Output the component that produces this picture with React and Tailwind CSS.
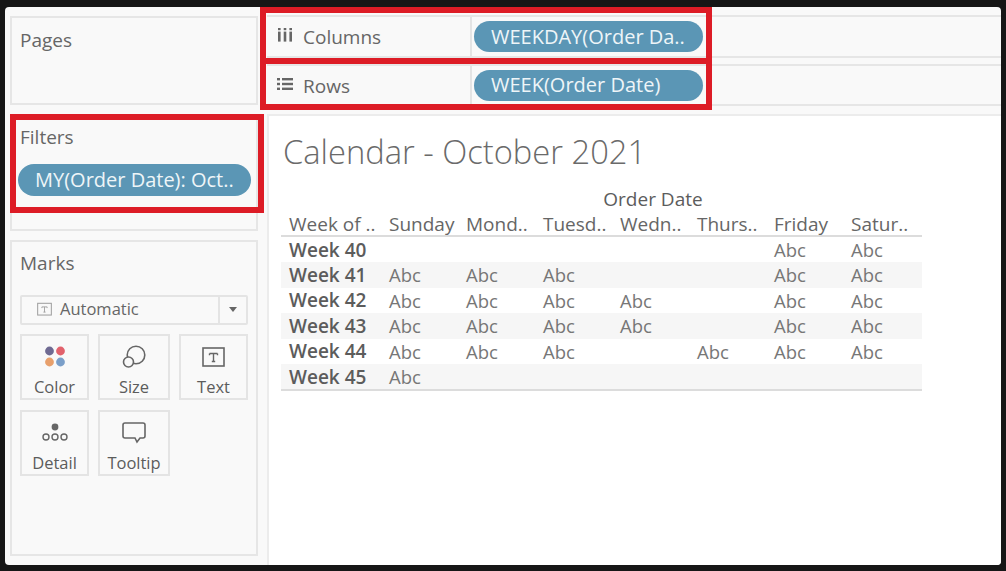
const FONT = { fontFamily: '"Open Sans", "Noto Sans", sans-serif' };

function Pill({ children, className }) {
  return (
    <div className={`flex items-center rounded-full bg-[#5b96b5] text-[20px] leading-none whitespace-nowrap text-[#eef5f8] ${className}`}>
      {children}
    </div>
  );
}

function ColumnsIcon() {
  return (
    <svg width="16" height="16" viewBox="0 0 16 16" className="fill-[#666]">
      <rect x="1" y="4.6" width="2.6" height="10" />
      <rect x="6.7" y="4.6" width="2.6" height="10" />
      <rect x="12.4" y="4.6" width="2.6" height="10" />
      <rect x="1" y="1" width="2.6" height="2.2" />
      <rect x="6.7" y="1" width="2.6" height="2.2" />
      <rect x="12.4" y="1" width="2.6" height="2.2" />
    </svg>
  );
}

function RowsIcon() {
  return (
    <svg width="16" height="14" viewBox="0 0 16 14" className="fill-[#666]">
      <rect x="0" y="1" width="3" height="2.4" />
      <rect x="5" y="1" width="11" height="2.4" />
      <rect x="0" y="5.8" width="3" height="2.4" />
      <rect x="5" y="5.8" width="11" height="2.4" />
      <rect x="0" y="10.6" width="3" height="2.4" />
      <rect x="5" y="10.6" width="11" height="2.4" />
    </svg>
  );
}

function Shelf({ icon, label, pillText, className, iconClass }) {
  return (
    <div className={`flex border-y-2 border-[#e6e6e6] ${className}`}>
      <div className="flex w-[205px] items-center border-r-2 border-[#e4e4e4] pl-[10px] text-[19px] text-[#666]">
        <span className={`flex w-[26px] items-center ${iconClass}`}>{icon}</span>
        <span className="pt-[2px]">{label}</span>
      </div>
      <div className="flex flex-1 items-center pl-[2px]">
        <Pill className="h-[31px] w-[229px] pl-[17px]">{pillText}</Pill>
      </div>
    </div>
  );
}

function TextBoxIcon({ size = 23, stroke = '#666' }) {
  return (
    <svg width={size} height={size} viewBox="0 0 23 21" fill="none">
      <rect x="1" y="1" width="21" height="18" stroke={stroke} strokeWidth="1.6" />
      <path d="M7.5 6.5h8M11.5 6.5v8M9.8 14.5h3.4M7.5 6.5v1.8M15.5 6.5v1.8" stroke={stroke} strokeWidth="1.4" />
    </svg>
  );
}

function ColorIcon() {
  return (
    <svg width="22" height="22" viewBox="0 0 22 22">
      <circle cx="5.5" cy="5" r="4.4" fill="#6f6a92" />
      <circle cx="16.5" cy="5" r="4.4" fill="#e2626c" />
      <circle cx="5.5" cy="16" r="4.4" fill="#e8a06c" />
      <circle cx="16.5" cy="16" r="4.4" fill="#7b9fc9" />
    </svg>
  );
}

function SizeIcon() {
  return (
    <svg width="24" height="24" viewBox="0 0 24 24" fill="none" stroke="#666" strokeWidth="1.6">
      <circle cx="14" cy="10" r="8.8" />
      <circle cx="6.5" cy="17" r="5" fill="#f9f9f9" />
    </svg>
  );
}

function DetailIcon() {
  return (
    <svg width="26" height="20" viewBox="0 0 26 20" fill="none" stroke="#666" strokeWidth="1.4">
      <circle cx="13" cy="4" r="3.4" fill="#666" stroke="none" />
      <circle cx="4" cy="14" r="3" />
      <circle cx="13" cy="14" r="3" />
      <circle cx="22" cy="14" r="3" />
    </svg>
  );
}

function TooltipIcon() {
  return (
    <svg width="24" height="22" viewBox="0 0 24 22" fill="none" stroke="#666" strokeWidth="1.6">
      <path d="M3 1h18a2 2 0 0 1 2 2v11a2 2 0 0 1-2 2h-3l-3 4-2-4H3a2 2 0 0 1-2-2V3a2 2 0 0 1 2-2z" />
    </svg>
  );
}

function MarkButton({ icon, label }) {
  return (
    <div className="flex h-[66px] flex-col items-center border-2 border-[#e4e4e4] text-[16.5px] leading-none text-[#5c5c5c]">
      <div className="flex h-[41px] items-center pt-[2px]">{icon}</div>
      <div className="pt-[2px]">{label}</div>
    </div>
  );
}

const HEADERS = ['Sunday', 'Mond..', 'Tuesd..', 'Wedn..', 'Thurs..', 'Friday', 'Satur..'];
const ROWS = [
  ['Week 40', [0, 0, 0, 0, 0, 1, 1]],
  ['Week 41', [1, 1, 1, 0, 0, 1, 1]],
  ['Week 42', [1, 1, 1, 1, 0, 1, 1]],
  ['Week 43', [1, 1, 1, 1, 0, 1, 1]],
  ['Week 44', [1, 1, 1, 0, 1, 1, 1]],
  ['Week 45', [1, 0, 0, 0, 0, 0, 0]],
];
const GRID = 'grid grid-cols-[100px_repeat(6,77px)_79px]';

function Table() {
  return (
    <div className="w-[641px]">
      <div className="h-[24px] pl-[103px] text-center text-[19px] leading-[24px] text-[#5c5c5c]">Order Date</div>
      <div className={`${GRID} h-[26px] border-b-2 border-[#dcdcdc] text-[19px] leading-[27px] text-[#666]`}>
        <div className="pl-[8px] whitespace-nowrap">Week of ..</div>
        {HEADERS.map((h) => (
          <div key={h} className="pl-[8px] whitespace-nowrap">{h}</div>
        ))}
      </div>
      {ROWS.map(([week, cells], i) => (
        <div
          key={week}
          className={`${GRID} h-[25.4px] items-center pt-[1px] text-[18.5px] leading-none ${i % 2 ? 'bg-[#f6f6f6]' : 'bg-white'}`}
        >
          <div className="pl-[8px] text-[19px] font-semibold text-[#5c5c5c]">{week}</div>
          {cells.map((c, j) => (
            <div key={j} className="pl-[8px] text-[#777]">{c ? 'Abc' : ''}</div>
          ))}
        </div>
      ))}
      <div className="h-[2px] bg-[#dcdcdc]" />
    </div>
  );
}

export default function App() {
  return (
    <div className="h-[571px] w-[1006px] bg-[#161616] pt-[7px] pr-[5px] pb-[6px] pl-[5px]" style={FONT}>
      <div className="relative flex h-full overflow-hidden rounded-sm bg-[#f9f9f9]">
        <aside className="flex w-[262px] shrink-0 flex-col gap-[9px] pt-[9px] pr-[9px] pl-[5px]">
          <section className="h-[89px] border-2 border-[#e6e6e6] pt-[8px] pl-[8px] text-[19px] text-[#666]">Pages</section>
          <section className="relative h-[117px] border-2 border-[#e6e6e6] pt-[7px] text-[19px]">
            <div className="pl-[8px] text-[#666]">Filters</div>
            <Pill className="mt-[12px] ml-[6px] h-[32px] w-[233px] pl-[17px]">MY(Order Date): Oct..</Pill>
            <div className="absolute top-[-2px] right-[-8px] left-[-2px] h-[99px] border-[6px] border-[#dd1c26]" />
          </section>
          <section className="h-[316px] border-2 border-[#e6e6e6] pt-[7px] pr-[8px] pl-[8px]">
            <div className="text-[19px] text-[#666]">Marks</div>
            <div className="mt-[17px] flex h-[30px] items-center rounded-[2px] border-2 border-[#e4e4e4] text-[16.5px] text-[#666]">
              <span className="ml-[15px] flex w-[23px] items-center opacity-60">
                <TextBoxIcon size={15} />
              </span>
              <span className="flex-1">Automatic</span>
              <span className="flex h-full w-[28px] items-center justify-center border-l-2 border-[#e4e4e4]">
                <span className="h-0 w-0 border-x-[4px] border-t-[5px] border-x-transparent border-t-[#666]" />
              </span>
            </div>
            <div className="mt-[9px] grid grid-cols-[69px_72px_69px] gap-x-[9px] gap-y-[10px]">
              <MarkButton icon={<ColorIcon />} label="Color" />
              <MarkButton icon={<SizeIcon />} label="Size" />
              <MarkButton icon={<TextBoxIcon />} label="Text" />
              <MarkButton icon={<DetailIcon />} label="Detail" />
              <MarkButton icon={<TooltipIcon />} label="Tooltip" />
            </div>
          </section>
        </aside>
        <div className="flex min-w-0 flex-1 flex-col pt-[8px]">
          <Shelf className="h-[43px]" iconClass="-mt-[4px]" icon={<ColumnsIcon />} label="Columns" pillText="WEEKDAY(Order Da.." />
          <Shelf className="mt-[6px] h-[42px]" iconClass="-mt-[2px]" icon={<RowsIcon />} label="Rows" pillText="WEEK(Order Date)" />
          <main className="mt-[8px] flex-1 border-t-2 border-l-2 border-[#ececec] bg-white pt-[13px] pl-[12px]">
            <h1 className="pl-[2px] text-[32.7px] leading-[46px] font-light text-[#6a6a6a]">Calendar - October 2021</h1>
            <div className="mt-[12px]">
              <Table />
            </div>
          </main>
        </div>
        <div className="absolute top-0 left-[255px] h-[103px] w-[452px] border-[6px] border-[#dd1c26]">
          <div className="mt-[45px] h-[6px] bg-[#dd1c26]" />
        </div>
      </div>
    </div>
  );
}
